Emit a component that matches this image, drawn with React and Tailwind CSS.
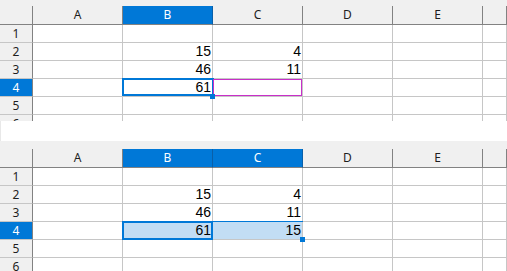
import React from "react";

const COLS = ["A", "B", "C", "D", "E", ""];

function Cursor({ wide }) {
  return (
    <>
      {wide && (
        <div className="absolute -left-[1px] -top-[1px] w-[181px] h-[19px] border border-[#0078d7] pointer-events-none" />
      )}
      <div
        className={
          "absolute -left-[1px] -top-[1px] border-2 border-[#0078d7] pointer-events-none " +
          (wide ? "w-[91px] h-[19px]" : "w-[92px] h-[18px]")
        }
      />
    </>
  );
}

function Handle() {
  return <div className="absolute left-[87px] top-[15px] w-[5px] h-[5px] bg-[#0078d7] z-10" />;
}

function Sheet({ strip, selCols, data, sel, cursor, wide, handle, ref2 }) {
  const rows = [1, 2, 3, 4, 5, 6];
  return (
    <div className="bg-white">
      <div className={"bg-[#f0f0f0] " + strip} />
      <div className="grid grid-cols-[33px_90px_90px_90px_90px_90px_1fr]">
        <div className="h-[19px] bg-[#f0f0f0] border-r border-b border-[#828282]" />
        {COLS.map((c, i) => {
          const on = selCols.includes(c);
          return (
            <div
              key={i}
              className={
                "h-[19px] border-b border-b-[#828282] flex items-center justify-center text-[12px] leading-[18px] font-['Noto_Sans'] pb-[1px] " +
                (on
                  ? "bg-[#0078d7] text-white border-r border-r-[#0a5fa8]"
                  : "bg-[#f0f0f0] text-[#1e1e1e] border-r border-r-[#828282]")
              }
            >
              {c}
            </div>
          );
        })}
        {rows.map((r) => (
          <React.Fragment key={r}>
            <div
              className={
                "h-[18px] border-r border-r-[#828282] border-b border-b-[#c6c6c6] flex items-start justify-center text-[12px] leading-[17px] font-['Noto_Sans'] " +
                (r === 4 ? "bg-[#0078d7] text-white" : "bg-[#f0f0f0] text-[#1e1e1e]")
              }
            >
              {r}
            </div>
            {COLS.map((c, i) => {
              const id = `${c}${r}`;
              const v = data[id];
              const selected = sel.includes(id);
              return (
                <div
                  key={i}
                  className={
                    "relative h-[18px] border-r border-b border-[#c6c6c6] text-right pr-[1px] text-[14px] leading-[17px] font-['Liberation_Sans'] text-black " +
                    (selected ? "bg-[#c2ddf4]" : "bg-white") +
                    (id === ref2 ? " shadow-[inset_0_0_0_1px_#c82fc8]" : "")
                  }
                >
                  {v}
                  {id === cursor && <Cursor wide={wide} />}
                  {id === handle && <Handle />}
                </div>
              );
            })}
          </React.Fragment>
        ))}
      </div>
    </div>
  );
}

export default function App() {
  return (
    <div className="w-[507px] h-[271px] overflow-hidden bg-white flex flex-col">
      <div className="h-[121px] shrink-0 overflow-hidden">
        <Sheet
          strip="h-[6px]"
          selCols={["B"]}
          sel={[]}
          cursor="B4"
          handle="B4"
          ref2="C4"
          data={{ B2: "15", C2: "4", B3: "46", C3: "11", B4: "61" }}
        />
      </div>
      <div className="h-[20px] shrink-0 bg-white border-l border-[#e8e8e8]" />
      <div className="h-[130px] shrink-0 overflow-hidden">
        <Sheet
          strip="h-[8px]"
          selCols={["B", "C"]}
          sel={["B4", "C4"]}
          cursor="B4"
          wide
          handle="C4"
          data={{ B2: "15", C2: "4", B3: "46", C3: "11", B4: "61", C4: "15" }}
        />
      </div>
    </div>
  );
}
